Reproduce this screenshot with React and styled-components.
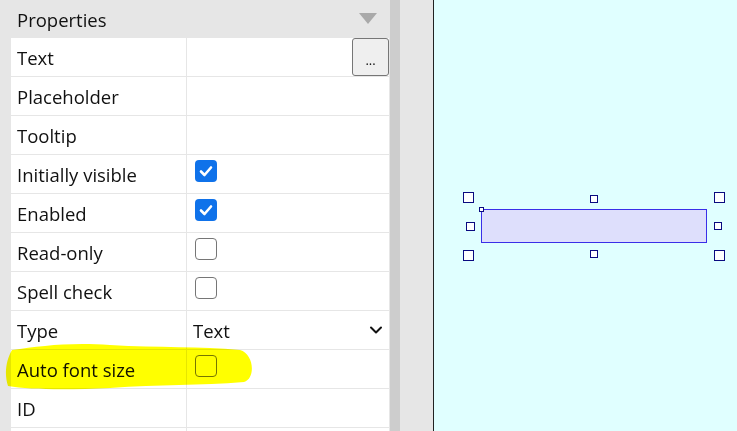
import React from 'react';
import styled, { createGlobalStyle } from 'styled-components';

const GlobalStyle = createGlobalStyle`
  html, body { margin: 0; padding: 0; }
  body { font-family: "Open Sans", "Noto Sans", sans-serif; background: #e6e6e6; overflow: hidden; }
`;

const rows = [
  { label: 'Text', kind: 'button' },
  { label: 'Placeholder' },
  { label: 'Tooltip' },
  { label: 'Initially visible', kind: 'check', checked: true },
  { label: 'Enabled', kind: 'check', checked: true },
  { label: 'Read-only', kind: 'check' },
  { label: 'Spell check', kind: 'check' },
  { label: 'Type', kind: 'select', value: 'Text' },
  { label: 'Auto font size', kind: 'check' },
  { label: 'ID' },
  { label: '' },
];

// handles around the selected widget (canvas coords)
const handles = [
  { x: 29, y: 192, size: 11 },
  { x: 156, y: 195, size: 8 },
  { x: 280, y: 192, size: 11 },
  { x: 32, y: 222, size: 9 },
  { x: 280, y: 222, size: 8 },
  { x: 29, y: 250, size: 11 },
  { x: 156, y: 250, size: 8 },
  { x: 280, y: 250, size: 11 },
  { x: 45, y: 207, size: 5 },
];

function CheckMark() {
  return (
    <svg width="14" height="12" viewBox="0 0 14 12">
      <path d="M2 6.5 L5.5 10 L12 2.5" fill="none" stroke="#fff" strokeWidth="2.6" strokeLinecap="round" strokeLinejoin="round" />
    </svg>
  );
}

function Chevron() {
  return (
    <svg width="14" height="10" viewBox="0 0 14 10">
      <path d="M2 2.5 L7 7.5 L12 2.5" fill="none" stroke="#111" strokeWidth="2" strokeLinecap="round" strokeLinejoin="round" />
    </svg>
  );
}

function ValueCell({ row }) {
  if (row.kind === 'check') return <Value><Checkbox checked={row.checked}>{row.checked && <CheckMark />}</Checkbox></Value>;
  if (row.kind === 'button') return <Value><EllipsisButton>...</EllipsisButton></Value>;
  if (row.kind === 'select') return <Value $pr={6}><SelectText>{row.value}</SelectText><Chevron /></Value>;
  return <Value />;
}

export default function App() {
  return (
    <>
      <GlobalStyle />
      <Layout>
        <PropertiesPanel>
          <Header>
            <span>Properties</span>
            <Triangle />
          </Header>
          <Table>
            {rows.map((row, i) => (
              <Row key={i}>
                <Label>{row.label}</Label>
                <ValueCell row={row} />
              </Row>
            ))}
          </Table>
          <Highlight width="400" height="431" viewBox="0 0 400 431">
            <path d="M12 350 C 40 346, 70 342, 110 345 C 160 348, 200 346, 240 350 C 254 354, 256 378, 244 382 C 200 386, 160 384, 110 388 C 70 390, 30 390, 8 386 C 4 374, 6 360, 12 350 Z" fill="#ffff00" />
          </Highlight>
        </PropertiesPanel>
        <ScrollTrack />
        <Gutter />
        <Canvas>
          <Widget />
          {handles.map((h, i) => (
            <Handle key={i} style={{ left: h.x, top: h.y, width: h.size, height: h.size }} />
          ))}
        </Canvas>
      </Layout>
    </>
  );
}

const Layout = styled.div`display: flex; width: 737px; height: 431px; overflow: hidden;`;
const PropertiesPanel = styled.div`position: relative; width: 390px; flex-shrink: 0; background: #e6e6e6; display: flex; flex-direction: column;`;
const Header = styled.div`height: 38px; flex-shrink: 0; display: flex; align-items: center; justify-content: space-between; padding: 0 13px 0 17px; font-size: 18.5px; color: #111;`;
const Triangle = styled.div`width: 0; height: 0; border-left: 9px solid transparent; border-right: 9px solid transparent; border-top: 11px solid #a9a9a9; margin-top: -2px;`;
const Table = styled.div`margin-left: 11px; width: 378px; background: #e6e6e6; display: flex; flex-direction: column; gap: 1px; flex-shrink: 0;`;
const Row = styled.div`display: grid; grid-template-columns: 175px 1fr; gap: 1px; height: 38px; flex-shrink: 0;`;
const Label = styled.div`background: #fff; display: flex; align-items: center; padding-left: 6px; font-size: 18.5px; color: #111; white-space: nowrap;`;
const Value = styled.div`background: #fff; display: flex; align-items: center; justify-content: space-between; padding-left: 8px; padding-right: ${({ $pr }) => $pr || 0}px;`;
const Checkbox = styled.span`
  width: 22px; height: 22px; box-sizing: border-box; border-radius: 4px;
  display: flex; align-items: center; justify-content: center; margin-top: -6px;
  background: ${({ checked }) => (checked ? '#0f72ea' : '#fff')};
  border: ${({ checked }) => (checked ? 'none' : '1.5px solid #767676')};
`;
const EllipsisButton = styled.button`
  margin-left: auto; width: 37px; height: 38px; box-sizing: border-box; border: 1px solid #767676; border-radius: 3px;
  background: #efefef; font-family: "Open Sans", sans-serif; font-size: 13px; color: #111; padding: 6px 0 0; line-height: 1;
`;
const SelectText = styled.span`font-size: 18.5px; color: #111; margin-left: -2px;`;
const Highlight = styled.svg`position: absolute; left: 0; top: 0; pointer-events: none; mix-blend-mode: multiply;`;
const ScrollTrack = styled.div`width: 10px; flex-shrink: 0; background: #cdcdcd;`;
const Gutter = styled.div`width: 33px; flex-shrink: 0; background: #e6e6e6; border-right: 1px solid #222;`;
const Canvas = styled.div`position: relative; flex: 1; background: #e0ffff;`;
const Widget = styled.div`position: absolute; left: 47px; top: 209px; width: 226px; height: 34px; box-sizing: border-box; background: #dedffc; border: 1.5px solid #3a2ee8;`;
const Handle = styled.div`position: absolute; box-sizing: border-box; border: 1.5px solid #0a0a80; background: #fff;`;
